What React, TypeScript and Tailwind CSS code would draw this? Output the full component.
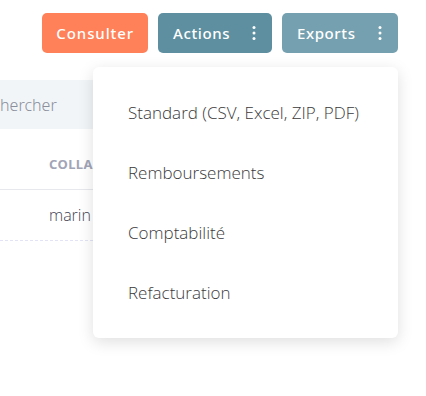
const EXPORT_ITEMS = [
  "Standard (CSV, Excel, ZIP, PDF)",
  "Remboursements",
  "Comptabilité",
  "Refacturation",
]

function Dots() {
  return (
    <svg width="4" height="16" viewBox="0 0 4 16" className="fill-current">
      <circle cx="2" cy="2.5" r="1.5" />
      <circle cx="2" cy="8" r="1.5" />
      <circle cx="2" cy="13.5" r="1.5" />
    </svg>
  )
}

export default function App() {
  return (
    <div
      className="relative h-[396px] w-[426px] overflow-hidden bg-white"
      style={{ fontFamily: '"Noto Sans", "Open Sans", sans-serif' }}
    >
      {/* Toolbar */}
      <div className="flex justify-end gap-[10px] pr-[28px] pt-[13px]">
        <button className="h-[40px] rounded-[5px] bg-[#ff8159] px-[14px] text-[15px] font-medium tracking-[0.06em] text-white">
          Consulter
        </button>
        <button className="flex h-[40px] w-[114px] items-center justify-between rounded-[5px] bg-[#5e8fa0] pl-[15px] pr-[16px] text-[15px] font-medium tracking-[0.04em] text-white">
          Actions
          <Dots />
        </button>
        <button className="flex h-[40px] w-[116px] items-center justify-between rounded-[5px] bg-[#75a0af] pl-[15px] pr-[16px] text-[15px] font-medium tracking-[0.04em] text-white">
          Exports
          <Dots />
        </button>
      </div>

      {/* Search, scrolled so only its end shows */}
      <div className="mt-[27px] flex h-[49px] w-[200px] items-center overflow-hidden bg-[#f2f5f8]">
        <span className="ml-[-26px] text-[16px] font-light text-[#8a8f9c]">Rechercher</span>
      </div>

      {/* Table, mostly under the dropdown */}
      <div className="mt-[26px] w-[93px] overflow-hidden">
        <div className="flex h-[35px] items-start border-b border-[#e6e8ee] pl-[49px]">
          <span className="whitespace-nowrap text-[13px] font-bold uppercase tracking-[0.03em] text-[#a1a5b7]">
            Colla
          </span>
        </div>
        <div className="flex h-[51px] items-center border-b border-dashed border-[#e2e4f6] pl-[49px]">
          <span className="whitespace-nowrap font-['Open_Sans',sans-serif] text-[16px] font-light text-[#3f4254]">
            marin
          </span>
        </div>
      </div>

      {/* Exports dropdown */}
      <div className="absolute left-[93px] top-[67px] w-[305px] rounded-[6px] bg-white pb-[15px] pt-[16px] shadow-[0_4px_16px_rgba(0,0,0,0.13)]">
        {EXPORT_ITEMS.map((item) => (
          <div
            key={item}
            className="flex h-[60px] items-center pl-[35px] font-['Open_Sans',sans-serif] text-[17px] font-light text-[#3a3a3a]"
          >
            {item}
          </div>
        ))}
      </div>
    </div>
  )
}
